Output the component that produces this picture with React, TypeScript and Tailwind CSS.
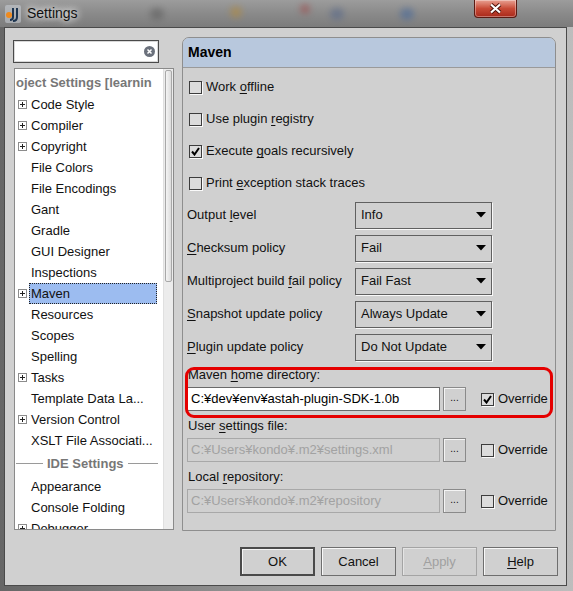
import React from "react";

const PlusIcon = () => (
  <svg width="9" height="9" viewBox="0 0 9 9" className="block">
    <rect x="0.5" y="0.5" width="8" height="8" fill="#fff" stroke="#8c8c8c" />
    <path d="M2 4.5h5M4.5 2v5" stroke="#222" strokeWidth="1" />
  </svg>
);

type Item = { label: string; plus?: boolean; selected?: boolean };

const items: Item[] = [
  { label: "Code Style", plus: true },
  { label: "Compiler", plus: true },
  { label: "Copyright", plus: true },
  { label: "File Colors" },
  { label: "File Encodings" },
  { label: "Gant" },
  { label: "Gradle" },
  { label: "GUI Designer" },
  { label: "Inspections" },
  { label: "Maven", plus: true, selected: true },
  { label: "Resources" },
  { label: "Scopes" },
  { label: "Spelling" },
  { label: "Tasks", plus: true },
  { label: "Template Data La..." },
  { label: "Version Control", plus: true },
  { label: "XSLT File Associati..." },
];

const ideItems: Item[] = [
  { label: "Appearance" },
  { label: "Console Folding" },
  { label: "Debugger", plus: true },
];

function TreeRow({ it }: { it: Item }) {
  return (
    <div className="h-[21px] flex items-center shrink-0">
      <div className="w-[14px] pl-[3px] flex items-center">{it.plus && <PlusIcon />}</div>
      <div
        className={
          it.selected
            ? "h-[21px] w-[128px] pl-[1px] flex items-center bg-[#9cbcf0] border border-dotted border-[#222]"
            : "h-[21px] pl-[2px] flex items-center whitespace-nowrap"
        }
      >
        {it.label}
      </div>
    </div>
  );
}

function CheckBox({ checked }: { checked?: boolean }) {
  return (
    <div className="w-[13px] h-[13px] shrink-0 border border-[#3c3c3c] bg-[#dcdcdc] shadow-[1px_1px_0_#fafafa] flex items-center justify-center">
      {checked && (
        <svg width="9" height="9" viewBox="0 0 9 9">
          <path d="M1 4.5 L3.5 7.5 L8 1" fill="none" stroke="#000" strokeWidth="2" />
        </svg>
      )}
    </div>
  );
}

function CheckRow({ children, checked }: { children: React.ReactNode; checked?: boolean }) {
  return (
    <div className="h-[32px] flex items-center pl-[6px] gap-[4px]">
      <CheckBox checked={checked} />
      <span>{children}</span>
    </div>
  );
}

function U({ children }: { children: React.ReactNode }) {
  return <span className="underline underline-offset-[2px]">{children}</span>;
}

function SelectRow({ label, value }: { label: React.ReactNode; value: string }) {
  return (
    <div className="h-[27px] flex items-center">
      <div className="w-[172px] pl-[4px] pb-[2px] whitespace-nowrap">{label}</div>
      <div className="w-[137px] h-[27px] border border-[#606060] shadow-[1px_1px_0_#f8f8f8] flex items-center justify-between pl-[5px] pr-[5px] pb-px">
        <span>{value}</span>
        <svg width="10" height="6" viewBox="0 0 10 6">
          <path d="M0 0 H10 L5 5.5 Z" fill="#000" />
        </svg>
      </div>
    </div>
  );
}

function DirBlock({
  label,
  value,
  enabled,
  checked,
}: {
  label: React.ReactNode;
  value: string;
  enabled?: boolean;
  checked?: boolean;
}) {
  return (
    <div className="flex flex-col">
      <div className="h-[16px] pl-[5px] whitespace-nowrap leading-[16px]">
        <span>{label}</span>
      </div>
      <div className="h-[24px] mt-[4px] flex items-center">
        <div
          className={
            "ml-[4px] w-[253px] h-[24px] flex items-center pl-[3px] whitespace-nowrap overflow-hidden " +
            (enabled
              ? "bg-white border border-[#6a6a6a] text-[#000]"
              : "bg-[#d0d0d0] border border-[#a8a8a8] text-[#a2a2a2]")
          }
        >
          {value}
        </div>
        <div className="ml-[3px] w-[23px] h-[24px] border border-[#8a8a8a] shadow-[inset_1px_1px_0_#f4f4f4] flex items-center justify-center text-[10px] leading-none pb-[3px]">
          ...
        </div>
        <div className="ml-[15px] flex items-center gap-[4px]">
          <CheckBox checked={checked} />
          <span>Override</span>
        </div>
      </div>
    </div>
  );
}

function Btn({ children, def, disabled }: { children: React.ReactNode; def?: boolean; disabled?: boolean }) {
  return (
    <div
      className={
        "w-[75px] h-[29px] flex items-center justify-center " +
        (def
          ? "border-2 border-[#4a4a4a] shadow-[inset_1px_1px_0_#f4f4f4]"
          : disabled
          ? "border border-[#a4a4a4] text-[#a0a0a0] shadow-[inset_1px_1px_0_#e4e4e4]"
          : "border border-[#6e6e6e] shadow-[inset_1px_1px_0_#f8f8f8]")
      }
    >
      <span>{children}</span>
    </div>
  );
}

export default function App() {
  return (
    <div className="w-[573px] h-[591px] overflow-hidden bg-gradient-to-r from-[#666] via-[#9a9a9a] to-[#bdbdbd] font-['Liberation_Sans',Arial,sans-serif] text-[13px] text-[#111]">
      {/* Title bar */}
      <div className="relative h-[27px] flex items-start bg-gradient-to-b from-[#9c9c9c] via-[#8a8a8a] to-[#7c7c7c] overflow-hidden">
        <div className="absolute left-[230px] top-[6px] w-[12px] h-[12px] rounded-full bg-[#b08a40] blur-[3px] opacity-60" />
        <div className="absolute left-[330px] top-[8px] w-[14px] h-[12px] rounded-full bg-[#5a6a8a] blur-[3px] opacity-60" />
        <div className="absolute left-[300px] top-[4px] w-[10px] h-[10px] rounded-full bg-[#a04040] blur-[3px] opacity-50" />
        <div className="absolute left-[400px] top-[8px] w-[14px] h-[12px] rounded-full bg-[#4a6a9a] blur-[3px] opacity-60" />
        <div className="absolute left-[150px] top-[8px] w-[14px] h-[12px] rounded-full bg-[#606060] blur-[3px] opacity-60" />
        <div className="relative flex items-center h-[27px] pl-[5px] gap-[6px]">
          <svg width="16" height="18" viewBox="0 0 16 18">
            <rect x="0" y="0" width="16" height="18" rx="2" fill="#cfd6de" opacity="0.5" />
            <circle cx="4" cy="10" r="3" fill="#f08a1c" />
            <path d="M8 3 V12 Q8 15 5 15" fill="none" stroke="#1d3550" strokeWidth="2" />
            <path d="M12 3 V12 Q12 16 8 16" fill="none" stroke="#1d3550" strokeWidth="2" />
          </svg>
          <span className="text-[14px] text-[#111] [text-shadow:0_0_6px_#fff,0_0_10px_#eee]">Settings</span>
        </div>
        <div className="relative ml-auto mr-[56px] w-[43px] h-[18px] rounded-b-[4px] border border-[#5a1a12] border-t-0 bg-gradient-to-b from-[#e8a092] via-[#c84a36] to-[#a8281a] flex items-center justify-center shadow-[inset_0_0_0_1px_rgba(255,255,255,0.35)]">
          <svg width="13" height="11" viewBox="0 0 13 11">
            <path d="M2 1.5 L11 9.5 M11 1.5 L2 9.5" stroke="#4a1008" strokeWidth="4" />
            <path d="M2 1.5 L11 9.5 M11 1.5 L2 9.5" stroke="#fff" strokeWidth="2.2" />
          </svg>
        </div>
      </div>

      {/* Client area */}
      <div className="ml-[4px] w-[563px] h-[559px] border border-[#4a4a4a] bg-[#d0d0d0] flex flex-col">
        <div className="flex pt-[9px] pl-[8px]">
          {/* Left column */}
          <div className="w-[161px] pt-[3px] flex flex-col">
            <div className="w-[146px] h-[23px] border border-[#4a4a4a] bg-white shadow-[inset_0_0_0_1px_#d8d8d8] flex items-center justify-end pr-[3px]">
              <svg width="11" height="11" viewBox="0 0 11 11">
                <circle cx="5.5" cy="5.5" r="5.5" fill="#6b717c" />
                <path d="M3.5 3.5 L7.5 7.5 M7.5 3.5 L3.5 7.5" stroke="#fff" strokeWidth="1.5" />
              </svg>
            </div>
            <div className="ml-[1px] mt-[5px] w-[160px] h-[462px] border border-[#8a8a8a] bg-white flex overflow-hidden">
              <div className="flex-1 flex flex-col pt-[2px] overflow-hidden">
                <div className="h-[23px] shrink-0 flex items-center pl-[1px] font-bold text-[#777] whitespace-nowrap">
                  oject Settings [learnin
                </div>
                {items.map((it) => (
                  <TreeRow key={it.label} it={it} />
                ))}
                <div className="h-[25px] shrink-0 flex items-center pl-[1px] pr-[5px] gap-[4px]">
                  <div className="w-[27px] h-px bg-[#9a9a9a]" />
                  <span className="font-bold text-[#777] whitespace-nowrap">IDE Settings</span>
                  <div className="flex-1 h-px bg-[#9a9a9a]" />
                </div>
                {ideItems.map((it) => (
                  <TreeRow key={it.label} it={it} />
                ))}
              </div>
              <div className="w-[10px] bg-[#ececec] border-l border-[#e0e0e0] pt-[1px] px-px">
                <div className="h-[212px] rounded-[2px] border border-[#a8a8a8] bg-gradient-to-r from-[#f4f4f4] to-[#dcdcdc]" />
              </div>
            </div>
          </div>

          {/* Right panel */}
          <div className="ml-[8px] w-[374px] h-[494px] border border-[#8e8e8e] rounded-t-[7px] flex flex-col bg-[#d0d0d0]">
            <div className="h-[30px] bg-[#b8c8dd] rounded-t-[6px] border-b border-[#9a9a9a] flex items-center pl-[5px] font-bold text-[14px] text-[#000]">
              Maven
            </div>
            <div className="pt-[3px] flex flex-col">
              <CheckRow>
                Work <U>o</U>ffline
              </CheckRow>
              <CheckRow>
                Use plugin <U>r</U>egistry
              </CheckRow>
              <CheckRow checked>
                Execute <U>g</U>oals recursively
              </CheckRow>
              <CheckRow>
                Print <U>e</U>xception stack traces
              </CheckRow>
              <div className="mt-[3px] flex flex-col gap-[6px]">
                <SelectRow label={<>Output <U>l</U>evel</>} value="Info" />
                <SelectRow label={<><U>C</U>hecksum policy</>} value="Fail" />
                <SelectRow label={<>Multiproject build <U>f</U>ail policy</>} value="Fail Fast" />
                <SelectRow label={<><U>S</U>napshot update policy</>} value="Always Update" />
                <SelectRow label={<><U>P</U>lugin update policy</>} value="Do Not Update" />
              </div>
              <div className="relative mt-[6px] flex flex-col gap-[7px]">
                <DirBlock
                  label={<>Maven <U>h</U>ome directory:</>}
                  value="C:¥dev¥env¥astah-plugin-SDK-1.0b"
                  enabled
                  checked
                />
                <DirBlock label={<>User <U>s</U>ettings file:</>} value="C:¥Users¥kondo¥.m2¥settings.xml" />
                <DirBlock label={<>Local <U>r</U>epository:</>} value="C:¥Users¥kondo¥.m2¥repository" />
                <div className="absolute left-[2px] top-0 w-[368px] h-[51px] border-[3px] border-[#e50000] rounded-[9px] pointer-events-none" />
              </div>
            </div>
          </div>
        </div>

        <div className="mt-[16px] flex justify-end gap-[6px] pr-[8px]">
          <Btn def>OK</Btn>
          <Btn>Cancel</Btn>
          <Btn disabled>
            <U>A</U>pply
          </Btn>
          <Btn>
            <U>H</U>elp
          </Btn>
        </div>
      </div>
    </div>
  );
}
